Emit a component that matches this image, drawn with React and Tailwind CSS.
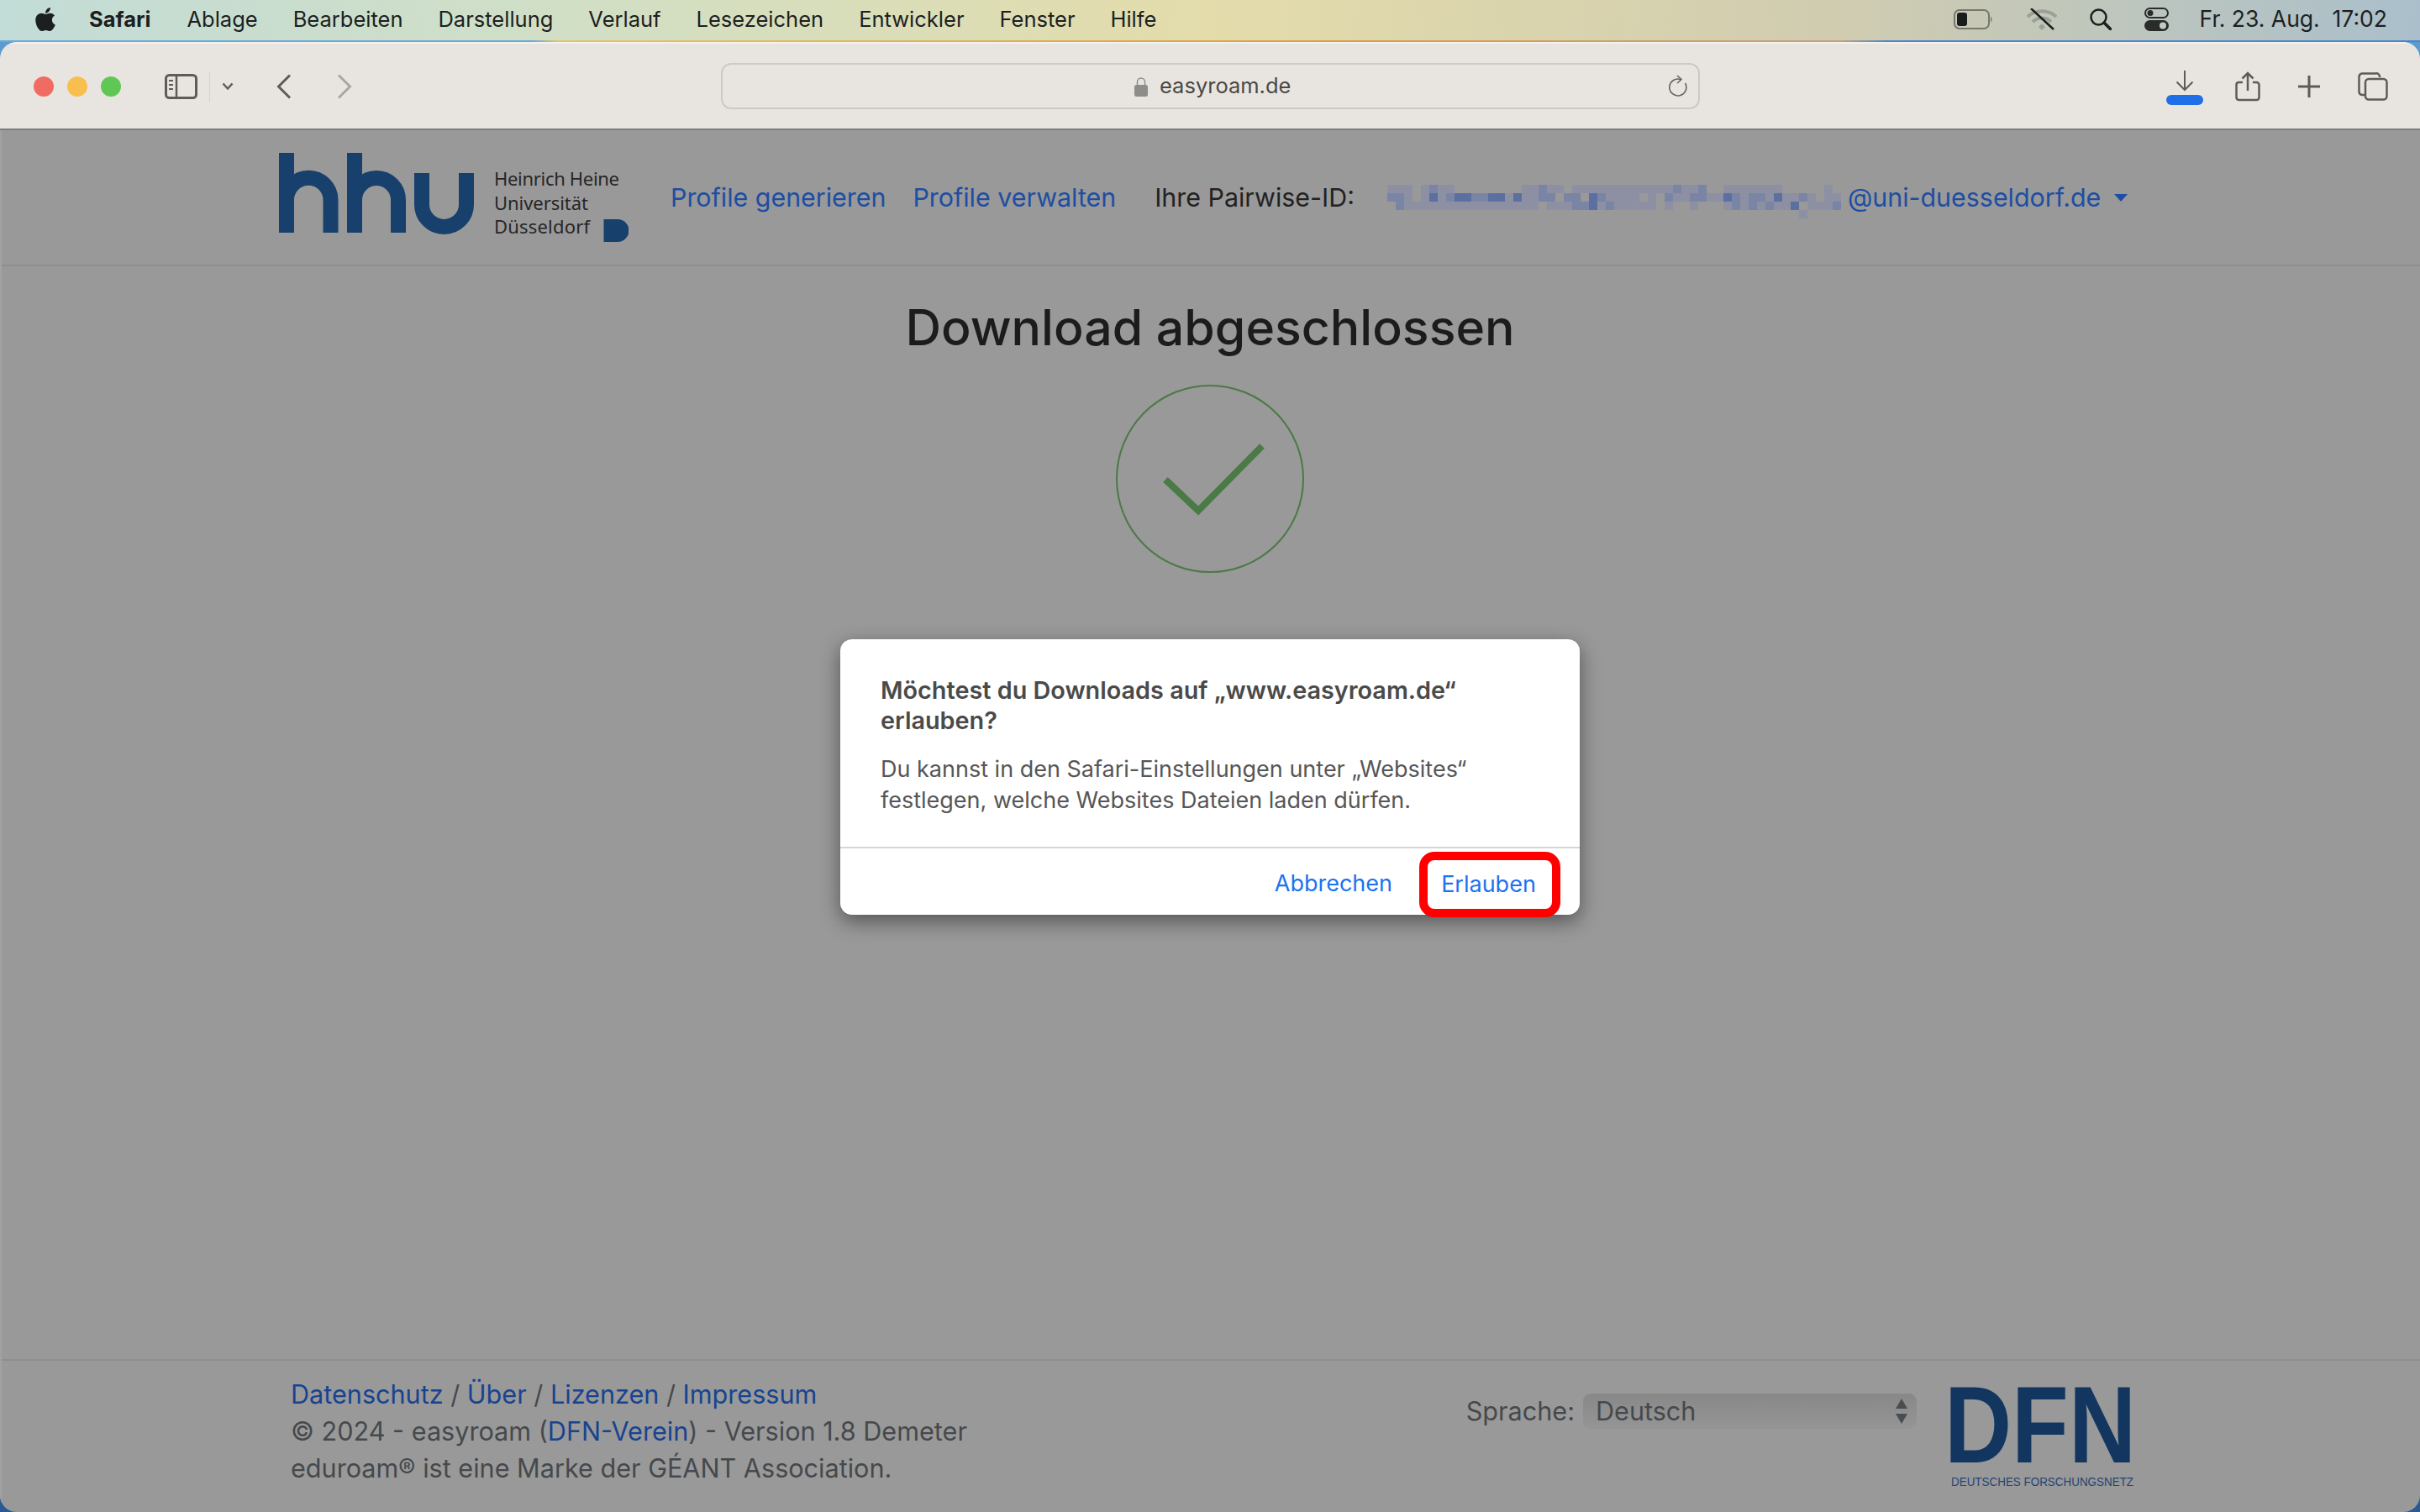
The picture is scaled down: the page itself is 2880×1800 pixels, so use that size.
import React from "react";
import { FaApple } from "react-icons/fa";

const menuItems = ["Ablage", "Bearbeiten", "Darstellung", "Verlauf", "Lesezeichen", "Entwickler", "Fenster", "Hilfe"];

// pixelated part of the pairwise id, one char per 10px cell
const mosaicRows = [
  "1110121100000000112110111111111111211200111111100000100000",
  "2210131233223313112202203211110102112211321221311210110000",
  "0211111111111111110111223121111101001000121212113011120000",
  "0000000000000000000000000000000000000000000000000100000000",
];
const mosaicColors = { 1: "#8d90a3", 2: "#7a84a5", 3: "#5b6fa1" };

function Mosaic() {
  return (
    <svg width="550" height="40" className="mt-[10px] shrink-0">
      {mosaicRows.map((row, y) =>
        row.split("").map((c, x) =>
          c === "0" ? null : <rect key={x + "-" + y} x={x * 10} y={y * 10} width="10" height="10" fill={mosaicColors[c]} />
        )
      )}
    </svg>
  );
}

function HhuLogo() {
  return (
    <svg width="416" height="106" className="shrink-0" fill="none">
      <g stroke="#17406c" strokeWidth="18">
        <path d="M9 0V95M9 56A26.25 26.25 0 0 1 61.5 56V95" />
        <path d="M90 0V95M90 56A26 26 0 0 1 142 56V95" />
        <path d="M170 24V61.5A26.5 26.5 0 0 0 223 61.5V24" />
      </g>
      <g fontFamily="Noto Sans, sans-serif" fontSize="22" fill="#262626">
        <text x="256" y="39" textLength="149">Heinrich Heine</text>
        <text x="256" y="68" textLength="112">Universität</text>
        <text x="256" y="96" textLength="114">Düsseldorf</text>
      </g>
      <path d="M386.5 79H403A13.5 13.5 0 0 1 403 106H386.5Z" fill="#17406c" />
    </svg>
  );
}

function DfnLogo() {
  return (
    <div className="w-[218px] shrink-0 font-['Liberation_Sans',sans-serif] whitespace-nowrap">
      <div className="h-[94px] mt-[2px] -ml-[8px] text-[129px] leading-[94px] font-bold text-[#12365f] origin-top-left scale-x-[0.86]">DFN</div>
      <div className="mt-[12px] text-[15px] leading-[18px] text-[#1f4573] origin-top-left scale-x-[0.895]">DEUTSCHES FORSCHUNGSNETZ</div>
    </div>
  );
}

function StatusIcons() {
  return (
    <div className="flex items-center">
      {/* battery */}
      <svg width="46" height="24" fill="none">
        <rect x="1" y="1" width="41" height="22" rx="6" stroke="#77776c" strokeWidth="2" />
        <rect x="4" y="4" width="12" height="16" rx="3" fill="#1b1d1c" />
        <path d="M44 8.5C46 10 46 14 44 15.5Z" fill="#77776c" />
      </svg>
      {/* wifi off */}
      <svg width="36" height="26" fill="none" className="ml-[41px]">
        <g stroke="#9aa195" strokeWidth="4">
          <path d="M1 10C10 1 26 1 35 10" />
          <path d="M7 16C13 10 23 10 29 16" />
        </g>
        <path d="M14 22L18 18L22 22L18 26Z" fill="#9aa195" />
        <path d="M5 0L32 25" stroke="#1c1f1f" strokeWidth="2.5" />
      </svg>
      {/* search */}
      <svg width="26" height="26" fill="none" className="ml-[39px]" stroke="#1c1f1f">
        <circle cx="10.5" cy="10.5" r="9" strokeWidth="2.5" />
        <path d="M17 17L24.5 24.5" strokeWidth="3.5" strokeLinecap="round" />
      </svg>
      {/* control center */}
      <svg width="30" height="28" fill="none" className="ml-[39px]">
        <rect x="1" y="1" width="27" height="11" rx="5.5" stroke="#2a2c2b" strokeWidth="2" />
        <circle cx="7" cy="6.5" r="3.5" fill="#2a2c2b" />
        <rect x="0" y="15" width="29" height="13" rx="6.5" fill="#2a2c2b" />
        <circle cx="22" cy="21.5" r="4" fill="#c4cbc4" />
      </svg>
    </div>
  );
}

function MenuBar() {
  return (
    <div className="h-[48px] pb-[2px] flex items-center bg-[linear-gradient(90deg,#c2dcd7_0%,#d2dfc4_25%,#e4dcab_50%,#d0ccb0_76%,#aabfcb_100%)] text-[#1c1f1f] text-[25.5px] font-['Inter',sans-serif]">
      <FaApple className="ml-[38px] text-[#1c1f1f]" size={32} />
      <span className="ml-[36px] font-bold">Safari</span>
      <div className="flex gap-[42px] ml-[43px]">
        {menuItems.map((item) => (
          <span key={item}>{item}</span>
        ))}
      </div>
      <div className="ml-auto flex items-center pr-[39px]">
        <StatusIcons />
        <span className="ml-[36px] whitespace-pre text-[26.5px]">Fr. 23. Aug.  17:02</span>
      </div>
    </div>
  );
}

function Toolbar() {
  const ic = "#5f5b56";
  return (
    <div className="h-[105px] shrink-0 flex items-center bg-[#e8e5e0] border-t-2 border-[#f3f1ee] border-b-2 border-b-[#7c7c7c]">
      <div className="flex gap-[16px] ml-[40px]">
        <div className="w-[24px] h-[24px] rounded-full bg-[#f06b62]" />
        <div className="w-[24px] h-[24px] rounded-full bg-[#f8bf4f]" />
        <div className="w-[24px] h-[24px] rounded-full bg-[#5fc855]" />
      </div>
      {/* sidebar toggle */}
      <svg width="39" height="30" fill="none" stroke={ic} className="ml-[52px]">
        <rect x="1.5" y="1.5" width="36" height="27" rx="4" strokeWidth="3" />
        <path d="M14 2V28" strokeWidth="2.5" />
        <path d="M5 8H10M5 13H10M5 18H10" strokeWidth="2" />
      </svg>
      <div className="w-[1px] h-[36px] bg-[#d5d3ce] ml-[14px]" />
      <svg width="14" height="10" fill="none" stroke={ic} strokeWidth="2.5" className="ml-[14px]">
        <path d="M1.5 1.5L7 7.5L12.5 1.5" />
      </svg>
      <svg width="18" height="30" fill="none" stroke={ic} strokeWidth="3" className="ml-[51px]">
        <path d="M16 1.5L2.5 15L16 28.5" />
      </svg>
      <svg width="18" height="30" fill="none" stroke="#aaa7a3" strokeWidth="3" className="ml-[54px]">
        <path d="M2 1.5L15.5 15L2 28.5" />
      </svg>

      {/* url bar */}
      <div className="w-[1165px] h-[55px] ml-[439px] rounded-[12px] border-2 border-[#cdcac5] flex items-center relative">
        <div className="flex items-center ml-[490px]">
          <svg width="16" height="24" fill="none">
            <path d="M3.5 11V6.5A4.5 4.5 0 0 1 12.5 6.5V11" stroke="#8f8d8a" strokeWidth="1.5" />
            <rect x="0" y="10" width="16" height="14" rx="2.5" fill="#8f8d8a" />
          </svg>
          <span className="ml-[14px] text-[25.5px] text-[#4a4846] font-['Inter',sans-serif]">easyroam.de</span>
        </div>
        <svg width="24" height="26" fill="none" stroke="#66635f" strokeWidth="1.6" className="absolute right-[12px] top-[12px]">
          <path d="M15 5.5A10 10 0 1 0 20.5 10" />
          <path d="M11 1L16 5.5L11 10" />
        </svg>
      </div>

      {/* download */}
      <div className="w-[44px] ml-[555px] mt-[3px] flex flex-col items-center">
        <svg width="22" height="25" fill="none" stroke={ic} strokeWidth="2">
          <path d="M11 0V23M1.5 13.5L11 23L20.5 13.5" />
        </svg>
        <div className="w-[44px] h-[12px] rounded-full bg-[#1f6fe8] mt-[4px]" />
      </div>
      {/* share */}
      <svg width="30" height="36" fill="none" stroke={ic} strokeWidth="2.5" className="ml-[38px]">
        <path d="M9 13H4A3 3 0 0 0 1.5 16V31A3 3 0 0 0 4.5 34H25.5A3 3 0 0 0 28.5 31V16A3 3 0 0 0 25.5 13H21" />
        <path d="M15 23V2M8.5 8.5L15 2L21.5 8.5" />
      </svg>
      <svg width="28" height="28" fill="none" stroke={ic} strokeWidth="3" className="ml-[44px]">
        <path d="M14 1V27M1 14H27" />
      </svg>
      {/* tabs */}
      <svg width="36" height="34" fill="none" stroke={ic} strokeWidth="2.5" className="ml-[44px]">
        <path d="M8 27H5A4 4 0 0 1 1.5 23V5A4 4 0 0 1 5 1.5H21A4 4 0 0 1 26 6" />
        <rect x="9" y="8" width="25.5" height="24.5" rx="4" />
      </svg>
    </div>
  );
}

function Dialog() {
  return (
    <div className="absolute left-[998px] top-[606px] w-[880px] h-[328px] bg-white rounded-[14px] shadow-[0_8px_24px_rgba(0,0,0,0.45)] flex flex-col font-['Inter',sans-serif]">
      <div className="h-[249px] shrink-0 border-b-2 border-[#d6d6d6] pl-[48px] pr-[30px] pt-[43px]">
        <div className="text-[28.8px] leading-[36px] font-semibold text-[#4a4a4a] whitespace-nowrap">
          Möchtest du Downloads auf „www.easyroam.de“
          <br />
          erlauben?
        </div>
        <div className="text-[27px] leading-[37px] text-[#565656] mt-[21px] whitespace-nowrap">
          Du kannst in den Safari-Einstellungen unter „Websites“
          <br />
          festlegen, welche Websites Dateien laden dürfen.
        </div>
      </div>
      <div className="flex-1 flex items-start justify-end">
        <span className="text-[#1a73f0] text-[27px] leading-[40px] mt-[22px]">Abbrechen</span>
        <div className="w-[168px] h-[78px] ml-[32px] mr-[23px] mt-[4px] pr-[3px] shrink-0 border-[10px] border-[#fe0000] rounded-[18px] flex items-center justify-center">
          <span className="text-[#1a73f0] text-[27px] leading-[40px]">Erlauben</span>
        </div>
      </div>
    </div>
  );
}

function Footer() {
  return (
    <div className="mt-auto h-[182px] border-t-2 border-[#8e8e8e] flex justify-between pl-[344px] pr-[340px] pt-[18px] text-[#45494d] text-[30.6px] leading-[44px]">
      <div>
        <div>
          <span className="text-[#174390]">Datenschutz</span> / <span className="text-[#174390]">Über</span> /{" "}
          <span className="text-[#174390]">Lizenzen</span> / <span className="text-[#174390]">Impressum</span>
        </div>
        <div>
          © 2024 - easyroam (<span className="text-[#174390]">DFN-Verein</span>) - Version 1.8 Demeter
        </div>
        <div>eduroam® ist eine Marke der GÉANT Association.</div>
      </div>
      <div className="flex items-start">
        <span className="mt-[20px]">Sprache:</span>
        <div className="w-[397px] h-[42px] mt-[21px] ml-[10px] rounded-[9px] bg-[linear-gradient(180deg,#888888,#959595)] flex items-center justify-between pl-[15px] pr-[10px]">
          <span>Deutsch</span>
          <svg width="16" height="30" fill="#4a4d50">
            <path d="M8 0L15 12H1Z" />
            <path d="M8 30L15 18H1Z" />
          </svg>
        </div>
        <div className="ml-[41px] mt-[9px]">
          <DfnLogo />
        </div>
      </div>
    </div>
  );
}

export default function App() {
  return (
    <div className="w-[2880px] h-[1800px] flex flex-col overflow-hidden bg-[linear-gradient(180deg,#5c9ad0_0px,#5c9ad0_200px,#2a5a92_1700px)]">
      <MenuBar />
      <div className="h-[2px] shrink-0 bg-[linear-gradient(90deg,#6aa8d8_0%,#6aa8d8_22%,#e2c469_23%,#d99f45_55%,#c8a080_76%,#4a86c8_78%,#4a86c8_100%)]" />
      <div className="flex-1 flex flex-col rounded-[20px] overflow-hidden">
        <Toolbar />
        <div className="flex-1 flex flex-col relative bg-[#999999] border-l-2 border-[#a2a2a2] font-['Inter',sans-serif]">
          {/* site header */}
          <div className="h-[162px] shrink-0 border-b-2 border-[#8e8e8e] flex items-center pl-[330px] text-[30.4px]">
            <HhuLogo />
            <a className="ml-[50px] mt-[2px] text-[#1d4ea3]">Profile generieren</a>
            <a className="ml-[32px] mt-[2px] text-[#1d4ea3]">Profile verwalten</a>
            <span className="ml-[46px] mt-[2px] text-[#222222]">Ihre Pairwise-ID:</span>
            <div className="ml-[39px] flex items-center">
              <Mosaic />
              <a className="-ml-[2px] mt-[2px] text-[#1d4ea3]">@uni-duesseldorf.de</a>
              <svg width="16" height="9" fill="#1d4ea3" className="ml-[16px]">
                <path d="M0 0H16L8 9Z" />
              </svg>
            </div>
          </div>

          <div className="flex flex-col items-center pt-[34px] -ml-[2px]">
            <h1 className="text-[59px] leading-[77px] font-medium text-[#1c1c1c]">Download abgeschlossen</h1>
            <svg width="226" height="226" fill="none" stroke="#4a7a45" className="mt-[29px]">
              <circle cx="113" cy="113" r="111" strokeWidth="2" />
              <path d="M60 114L99 151L175 74" strokeWidth="8" />
            </svg>
          </div>

          <Dialog />
          <Footer />
        </div>
      </div>
    </div>
  );
}
